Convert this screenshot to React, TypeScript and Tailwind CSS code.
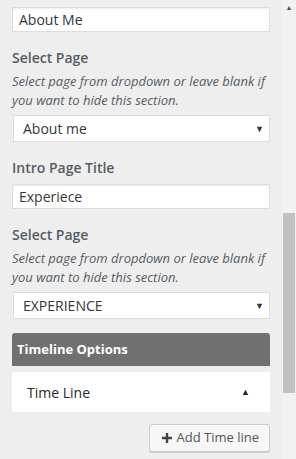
import type { ReactNode } from 'react'

const font = { fontFamily: '"Open Sans", "Noto Sans", sans-serif' }

function Label({ children }: { children: ReactNode }) {
  return <div className="text-[14px] font-semibold leading-[20px] text-[#555d66]">{children}</div>
}

function Hint() {
  return (
    <p className="mt-[4px] text-[13px] italic leading-[19px] text-[#555d66]">
      Select page from dropdown or leave blank if you want to hide this section.
    </p>
  )
}

function TextBox({ value }: { value: string }) {
  return (
    <div className="flex h-[25px] items-center border border-[#dddddd] bg-white px-[6px] text-[14px] text-[#32373c] shadow-[inset_0_1px_2px_rgba(0,0,0,0.07)]">
      {value}
    </div>
  )
}

function Dropdown({ value }: { value: string }) {
  return (
    <div className="mt-[5px] flex h-[27px] items-center justify-between border border-[#dddddd] bg-white pl-[9px] pr-[5px] text-[14px] text-[#32373c]">
      <span>{value}</span>
      <span className="text-[9px] text-[#333]">▼</span>
    </div>
  )
}

export default function App() {
  return (
    <div className="flex h-[459px] w-[296px] overflow-hidden bg-[#eeeeee]" style={font}>
      <div className="w-[282px] px-[12px] pt-[7px]">
        <TextBox value="About Me" />

        <div className="mt-[16px]">
          <Label>Select Page</Label>
          <Hint />
        </div>
        <div className="pl-[1px]">
          <Dropdown value="About me" />
        </div>

        <div className="mt-[16px]">
          <Label>Intro Page Title</Label>
        </div>
        <div className="mt-[6px]">
          <TextBox value="Experiece" />
        </div>

        <div className="mt-[16px]">
          <Label>Select Page</Label>
          <Hint />
        </div>
        <div className="pl-[1px]">
          <Dropdown value="EXPERIENCE" />
        </div>

        <div className="mt-[14px] flex h-[33px] items-center rounded-t-[3px] bg-[#707070] pl-[5px] text-[13px] font-bold text-white">
          Timeline Options
        </div>
        <div className="mt-[6px] flex h-[40px] items-center justify-between bg-white pl-[15px] pr-[20px] text-[14px] text-[#23282d]">
          <span>Time Line</span>
          <span className="text-[9px] text-[#222]">▲</span>
        </div>

        <div className="mt-[12px] flex justify-end">
          <button className="flex h-[28px] items-center gap-[5px] rounded-[3px] border border-[#cccccc] bg-[#f7f7f7] pl-[12px] pr-[10px] text-[13px] text-[#555555] shadow-[0_1px_0_#cccccc]">
            <svg width="10" height="10" viewBox="0 0 10 10">
              <path d="M3.8 0h2.4v3.8H10v2.4H6.2V10H3.8V6.2H0V3.8h3.8z" fill="#444" />
            </svg>
            Add Time line
          </button>
        </div>
      </div>

      <div className="flex w-[14px] flex-col bg-[#f1f1f1]">
        <div className="flex h-[17px] items-center justify-center text-[7px] text-[#505050]">▲</div>
        <div className="h-[196px]" />
        <div className="mx-[1px] h-[180px] bg-[#c1c1c1]" />
      </div>
    </div>
  )
}
